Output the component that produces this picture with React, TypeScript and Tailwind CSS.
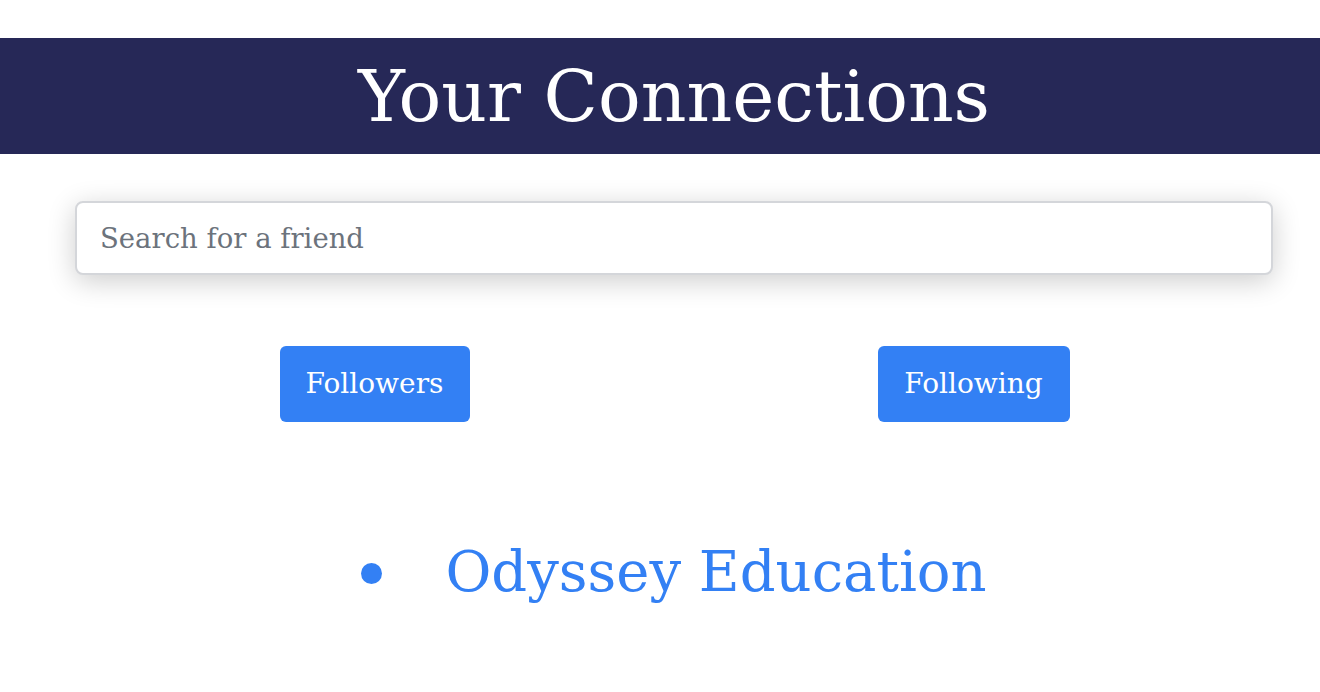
const serif = { fontFamily: '"DejaVu Serif", Georgia, serif' };

export default function App() {
  return (
    <div className="min-h-[692px] overflow-hidden bg-white" style={serif}>
      <div className="w-[1348px] pt-[38px]">
        {/* title bar */}
        <header className="flex h-[116px] items-center justify-center bg-[#262857]">
          <h1 className="text-[71px] leading-none text-white">Your Connections</h1>
        </header>

        <main className="px-[75px] pt-[47px]">
          <input
            type="text"
            placeholder="Search for a friend"
            className="h-[74px] w-full rounded-lg border-2 border-[#d4d6da] bg-white px-[23px] text-[27.5px] text-[#333] shadow-[0_6px_28px_rgba(0,0,0,0.2)] outline-none placeholder:text-[#6c737c]"
            style={serif}
          />

          <div className="mt-[71px] grid grid-cols-2">
            <div className="flex justify-center">
              <button className="h-[76px] w-[190px] rounded-md bg-[#3380f4] text-[28px] text-white">
                Followers
              </button>
            </div>
            <div className="flex justify-center">
              <button className="h-[76px] w-[192px] rounded-md bg-[#3380f4] text-[28px] text-white">
                Following
              </button>
            </div>
          </div>

          <ul className="mt-[122px] flex flex-col items-center">
            <li className="flex items-center gap-[63px] text-[#3380f4]">
              <span className="mt-[2px] h-[21px] w-[21px] rounded-full bg-[#3380f4]" />
              <span className="text-[56px] leading-none">Odyssey Education</span>
            </li>
          </ul>
        </main>
      </div>
    </div>
  );
}
